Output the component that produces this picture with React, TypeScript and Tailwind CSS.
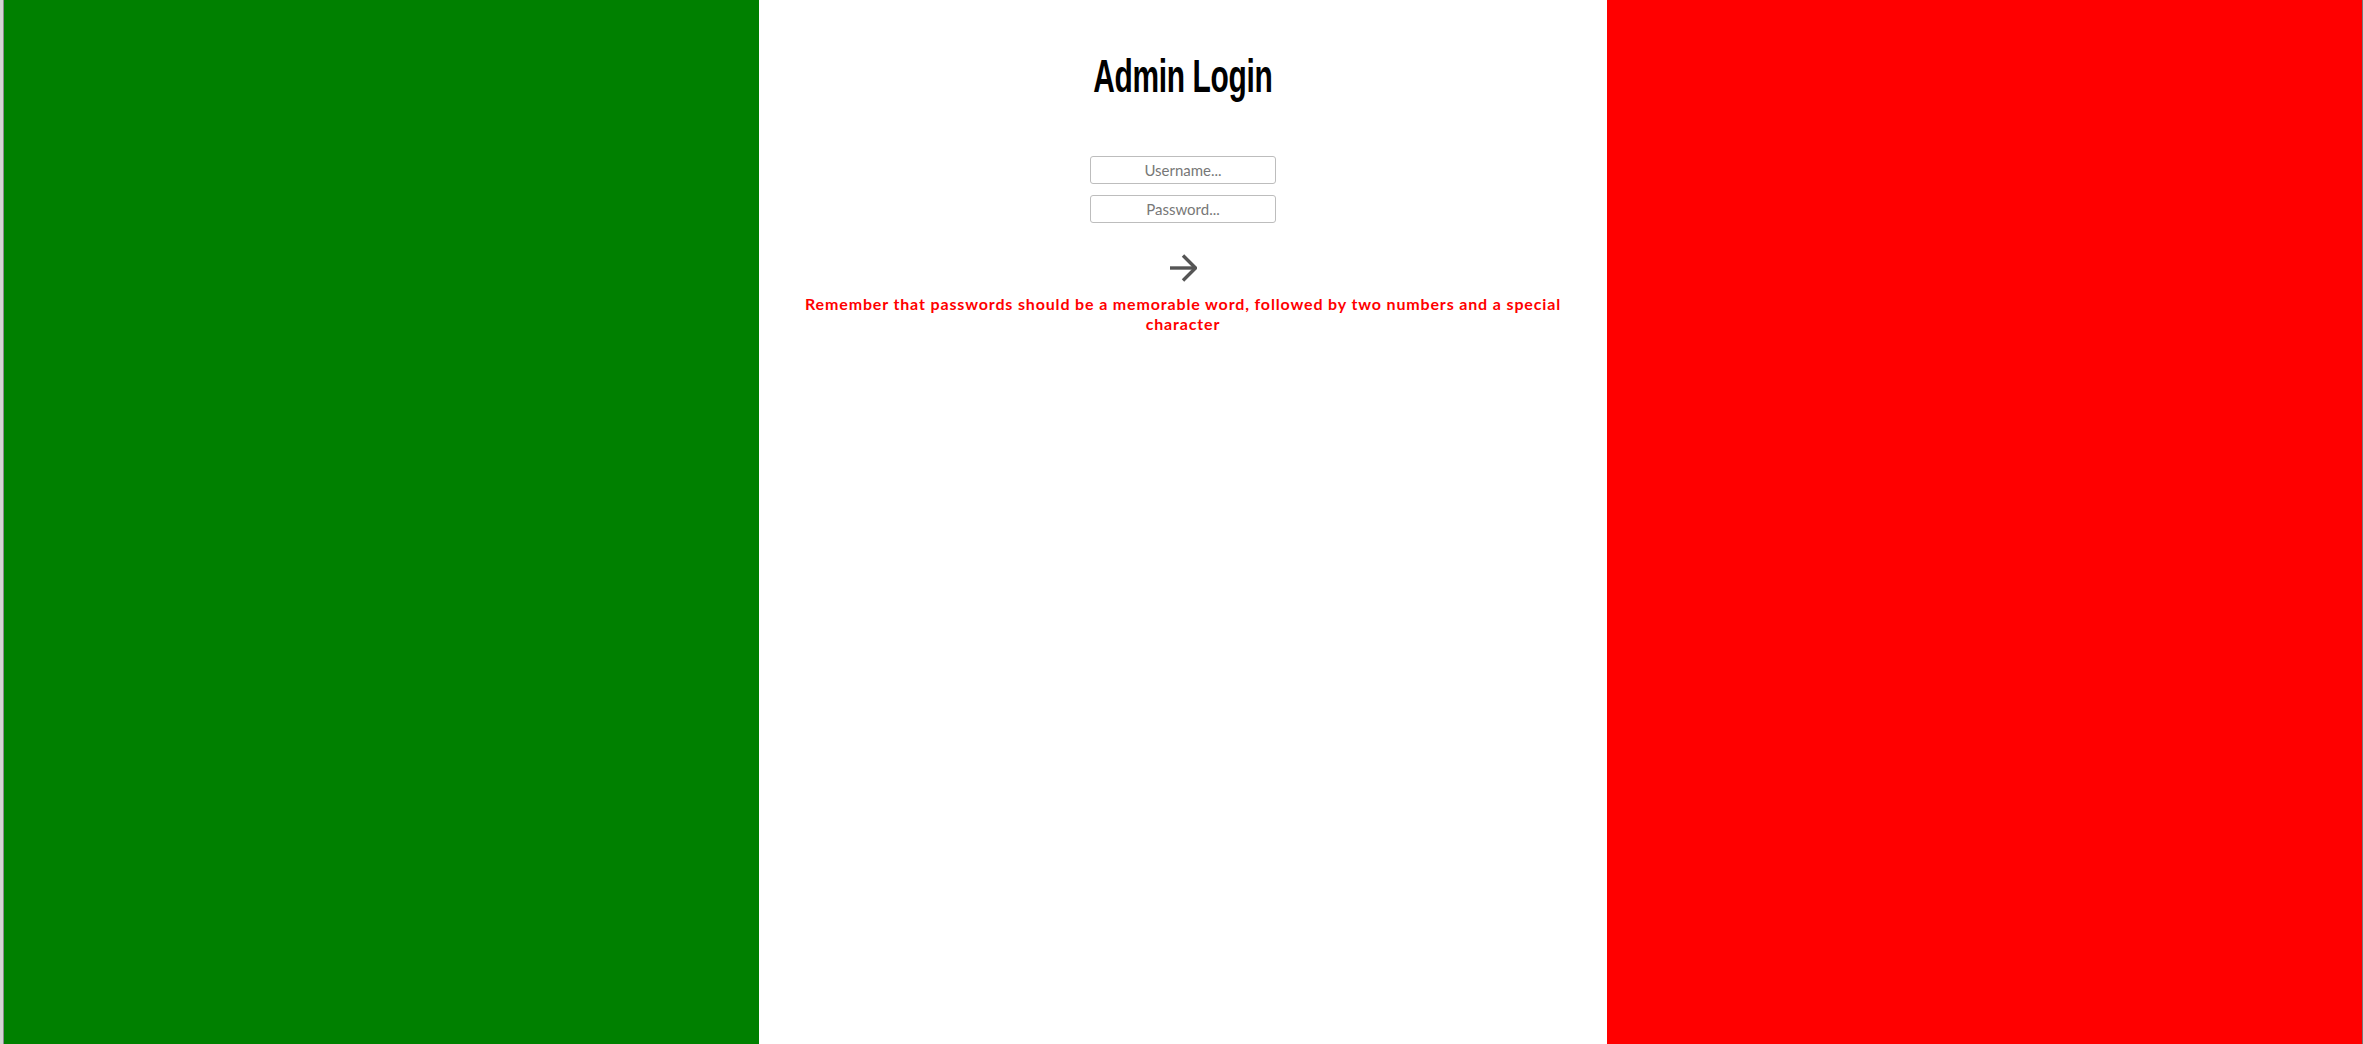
import React from 'react';

export default function App() {
  return (
    <div className="flex h-[1044px] w-full overflow-hidden">
      <div className="w-[4px] shrink-0 border-r border-[#8c8c8c] bg-[#d4d4d4]" />
      <div className="w-[755px] shrink-0 bg-[#008000]" />

      <div className="flex w-[848px] shrink-0 flex-col items-center bg-white px-[40px] font-['Lato',sans-serif]">
        <h1 className="mt-[53px] scale-x-[0.65] font-['Liberation_Sans_Narrow','Liberation_Sans',sans-serif] text-[46px] font-bold leading-none tracking-[-0.5px] text-black">
          Admin Login
        </h1>

        <input
          type="text"
          placeholder="Username..."
          className="mt-[57px] h-[28px] w-[186px] rounded-[3px] border border-[#bdbdbd] text-center text-[15px] text-[#333] outline-none placeholder:text-[#777777]"
        />
        <input
          type="password"
          placeholder="Password..."
          className="mt-[11px] h-[28px] w-[186px] rounded-[3px] border border-[#bdbdbd] text-center text-[15px] text-[#333] outline-none placeholder:text-[#777777]"
        />

        <button type="button" className="mt-[31px] cursor-pointer">
          <svg width="28" height="28" viewBox="0 0 28 28" fill="none" stroke="#555555" strokeWidth="3.4">
            <path d="M1 14h25" />
            <path d="M14 1.5 26.5 14 14 26.5" />
          </svg>
        </button>

        <p className="mt-[12px] text-center text-[16px] font-bold leading-[20px] tracking-[0.85px] text-[#ff0000]">
          Remember that passwords should be a memorable word, followed by two numbers and a special character
        </p>
      </div>

      <div className="flex-1 bg-[#ff0000]" />
      <div className="w-[1px] shrink-0 bg-[#777777]" />
    </div>
  );
}
